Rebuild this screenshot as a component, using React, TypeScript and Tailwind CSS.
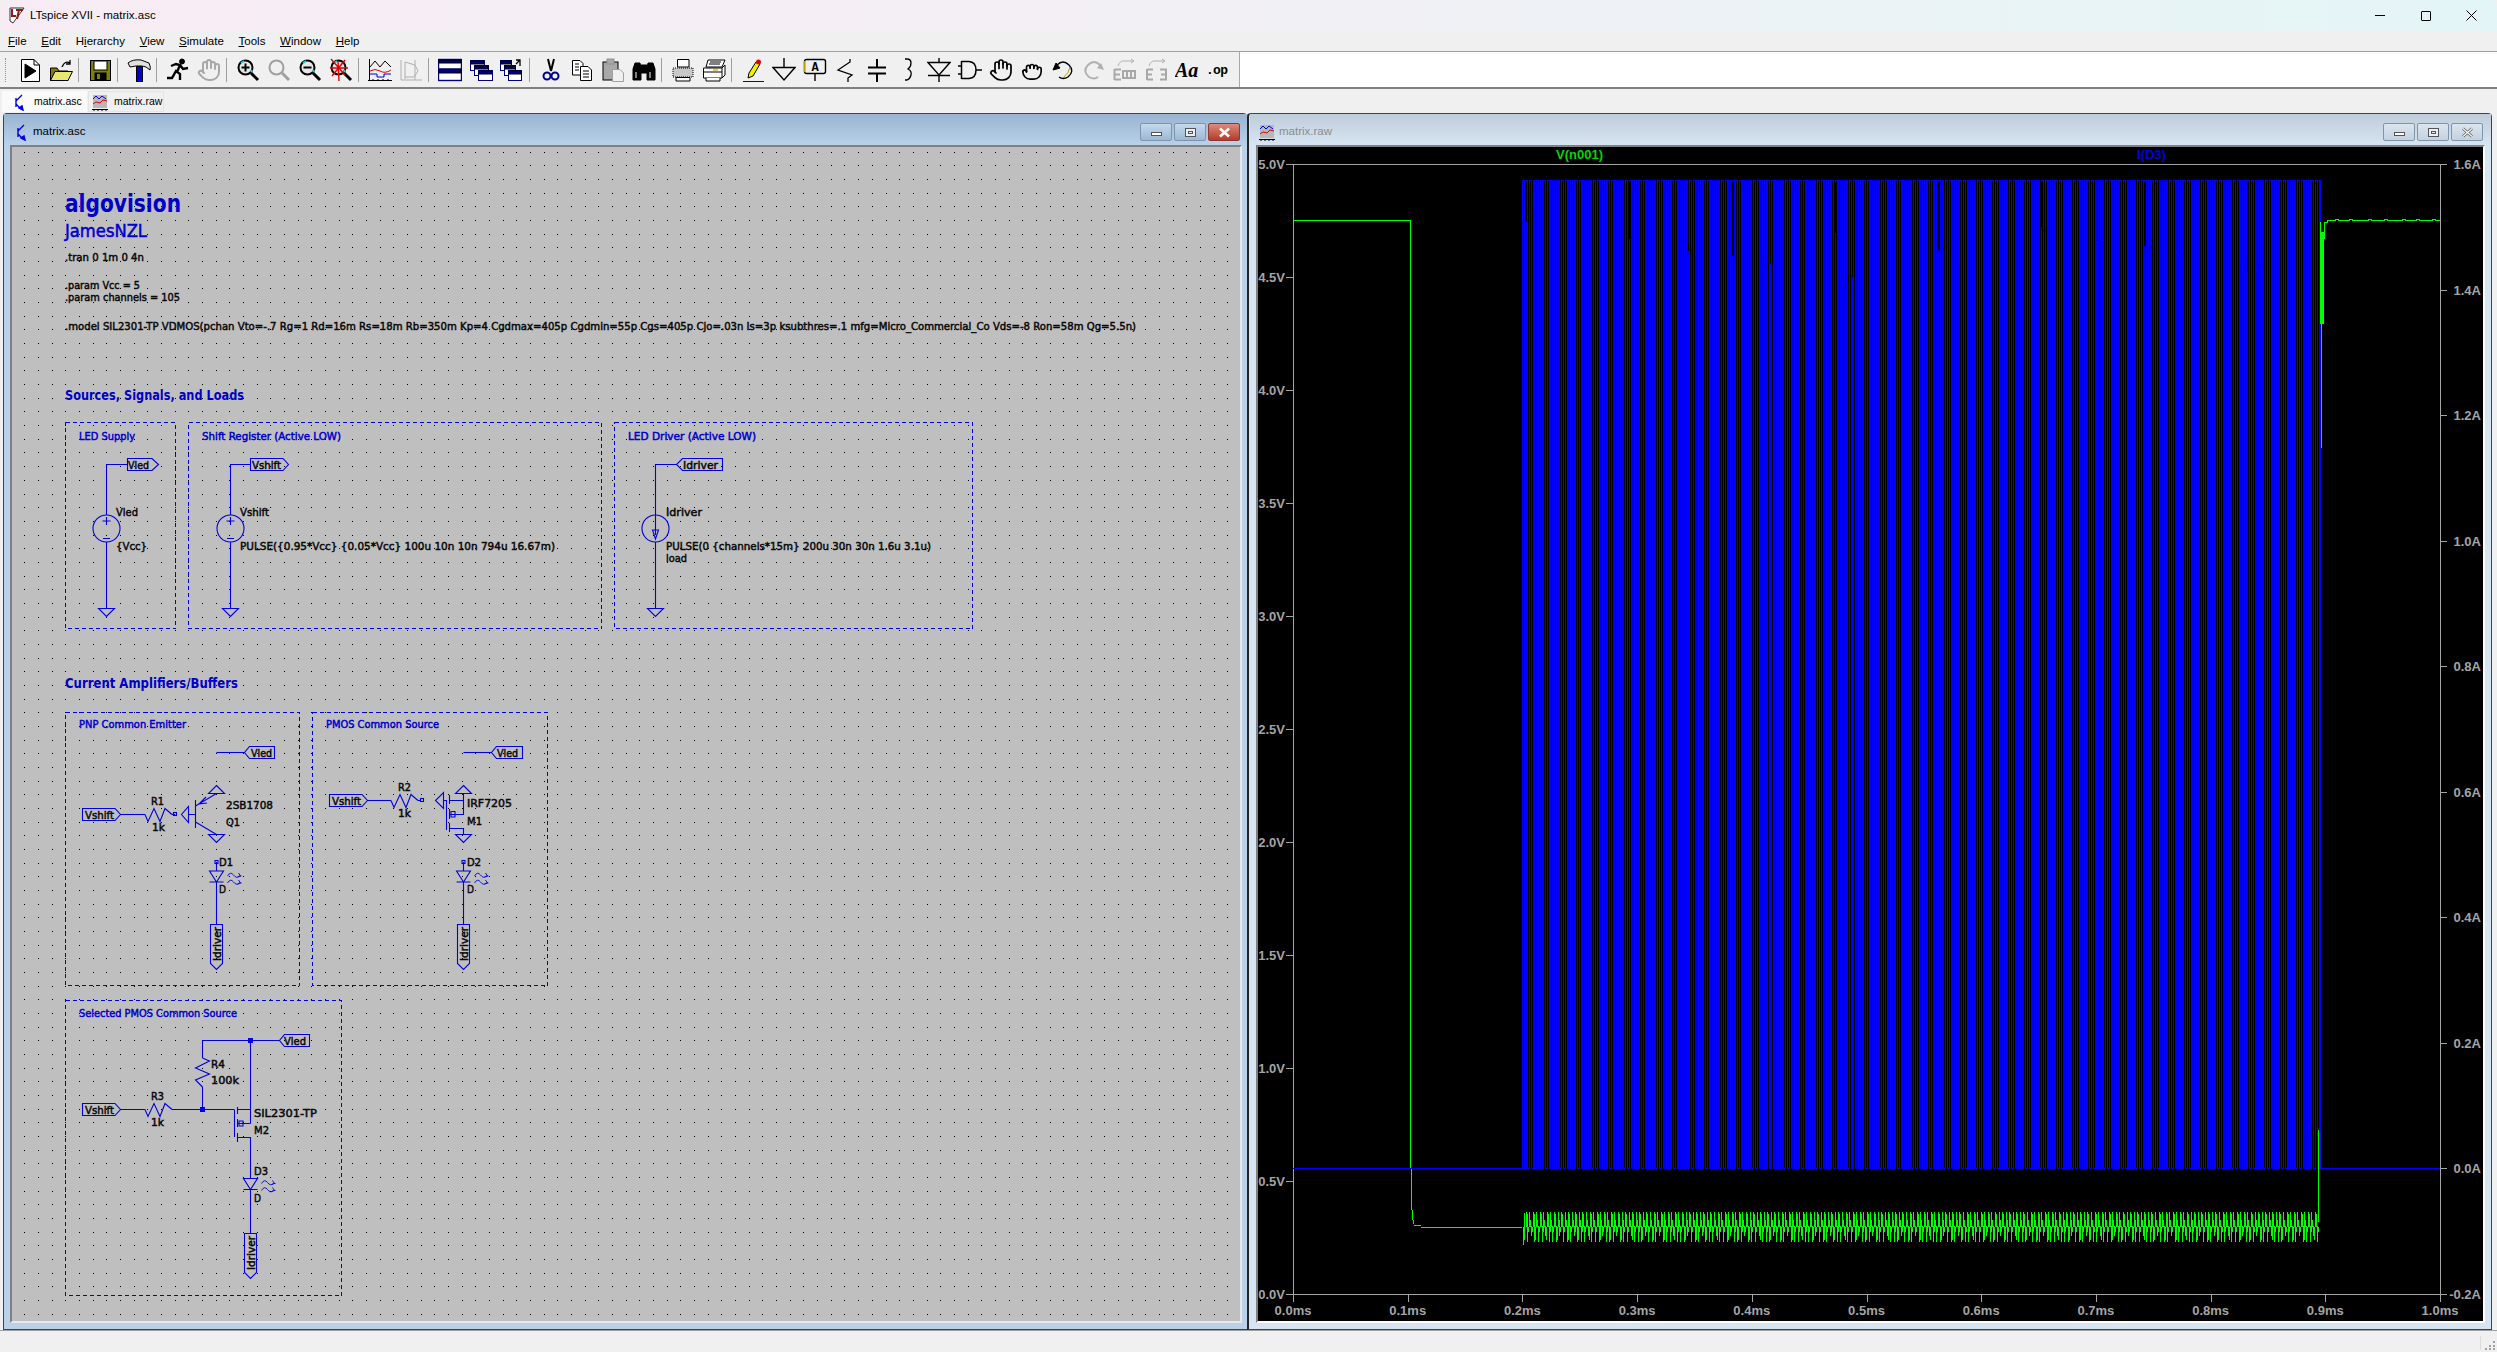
import type { ReactNode } from "react";
import { Grab, Hand } from "lucide-react";

// ---------- shared geometry helpers (page coordinates) ----------
const gnd = (x: number, y: number) => `M${x - 8} ${y}H${x + 8}L${x} ${y + 8}Z`;
const up = (x: number, y: number) => `M${x} ${y - 8}L${x + 8} ${y}H${x - 8}Z`;
const flagR = (a: number, b: number, tip: number, y: number) => `M${a} ${y - 6}H${b}L${tip} ${y}L${b} ${y + 6}H${a}Z`;
const flagL = (tip: number, a: number, b: number, y: number) => `M${b} ${y - 6}H${a}L${tip} ${y}L${a} ${y + 6}H${b}Z`;
const flagD = (x: number, y: number) => `M${x - 6} ${y}H${x + 6}V${y + 39}L${x} ${y + 45}L${x - 6} ${y + 39}Z`;
const led = (x: number, y: number) =>
  `M${x - 7} ${y}H${x + 7}L${x} ${y + 11}ZM${x - 7} ${y + 11}H${x + 7}`;
const ledRays = (x: number, y: number) =>
  `M${x + 11} ${y + 5}q3 -5 6 -1t6 1l2 0M${x + 22} ${y + 2}l2 3l-3 1M${x + 11} ${y + 12}q3 -5 6 -1t6 1l2 0M${x + 22} ${y + 9}l2 3l-3 1`;
const zig = (x: number, y: number) =>
  `M${x} ${y}l3 7l6 -13l6 13l5 -13l7 6`;

const dots = (() => {
  let d = "";
  for (let i = -4; i < 87; i++) {
    for (let j = -65; j < 22; j++) {
      const x = Math.round(65.3 + i * 13.67);
      const y = Math.round(1040.3 + j * 13.67);
      d += `M${x} ${y + 0.5}h1`;
    }
  }
  return d;
})();

const boxes = [
  [65, 422, 110, 206],
  [188, 422, 413, 206],
  [614, 422, 358, 206],
  [65, 712, 234, 273],
  [312, 712, 235, 273],
  [65, 1000, 276, 295],
];

type Txt = { x: number; y: number; t: string; w: number };
const blackText: Txt[] = [
  { x: 65, y: 261, t: ".tran 0 1m 0 4n", w: 79 },
  { x: 65, y: 289, t: ".param Vcc = 5", w: 75 },
  { x: 65, y: 301, t: ".param channels = 105", w: 115 },
  {
    x: 65,
    y: 330,
    t: ".model SIL2301-TP VDMOS(pchan Vto=-.7 Rg=1 Rd=16m Rs=18m Rb=350m Kp=4 Cgdmax=405p Cgdmin=55p Cgs=405p Cjo=.03n Is=3p ksubthres=.1 mfg=Micro_Commercial_Co Vds=-8 Ron=58m Qg=5.5n)",
    w: 1071,
  },
  { x: 128, y: 469, t: "Vled", w: 21 },
  { x: 116, y: 516, t: "Vled", w: 22 },
  { x: 116, y: 550, t: "{Vcc}", w: 31 },
  { x: 252, y: 469, t: "Vshift", w: 29 },
  { x: 240, y: 516, t: "Vshift", w: 29 },
  { x: 240, y: 550, t: "PULSE({0.95*Vcc} {0.05*Vcc} 100u 10n 10n 794u 16.67m)", w: 315 },
  { x: 683, y: 469, t: "Idriver", w: 35 },
  { x: 666, y: 516, t: "Idriver", w: 36 },
  { x: 666, y: 550, t: "PULSE(0 {channels*15m} 200u 30n 30n 1.6u 3.1u)", w: 265 },
  { x: 666, y: 562, t: "load", w: 21 },
  { x: 251, y: 757, t: "Vled", w: 21 },
  { x: 85, y: 819, t: "Vshift", w: 29 },
  { x: 151, y: 805, t: "R1", w: 13 },
  { x: 152, y: 831, t: "1k", w: 13 },
  { x: 226, y: 809, t: "2SB1708", w: 47 },
  { x: 226, y: 826, t: "Q1", w: 14 },
  { x: 219, y: 866, t: "D1", w: 14 },
  { x: 219, y: 893, t: "D", w: 7 },
  { x: 497, y: 757, t: "Vled", w: 21 },
  { x: 332, y: 805, t: "Vshift", w: 29 },
  { x: 398, y: 791, t: "R2", w: 13 },
  { x: 398, y: 817, t: "1k", w: 13 },
  { x: 467, y: 807, t: "IRF7205", w: 45 },
  { x: 467, y: 825, t: "M1", w: 15 },
  { x: 467, y: 866, t: "D2", w: 14 },
  { x: 467, y: 893, t: "D", w: 7 },
  { x: 284, y: 1045, t: "Vled", w: 22 },
  { x: 85, y: 1114, t: "Vshift", w: 29 },
  { x: 151, y: 1100, t: "R3", w: 13 },
  { x: 151, y: 1126, t: "1k", w: 13 },
  { x: 211, y: 1068, t: "R4", w: 14 },
  { x: 211, y: 1084, t: "100k", w: 28 },
  { x: 254, y: 1117, t: "SIL2301-TP", w: 63 },
  { x: 254, y: 1134, t: "M2", w: 15 },
  { x: 254, y: 1175, t: "D3", w: 14 },
  { x: 254, y: 1202, t: "D", w: 7 },
];

const blueSmall: Txt[] = [
  { x: 79, y: 440, t: "LED Supply", w: 56 },
  { x: 202, y: 440, t: "Shift Register (Active LOW)", w: 139 },
  { x: 628, y: 440, t: "LED Driver (Active LOW)", w: 128 },
  { x: 79, y: 728, t: "PNP Common Emitter", w: 107 },
  { x: 326, y: 728, t: "PMOS Common Source", w: 113 },
  { x: 79, y: 1017, t: "Selected PMOS Common Source", w: 158 },
];

const wires = [
  // sources row
  "M127.5 464.5H106.5V515M106.5 542V608",
  flagR(127.5, 152, 158.5, 464.5),
  gnd(106.5, 608.5),
  "M250.5 464.5H230.5V515M230.5 542V608",
  flagR(250.5, 283, 288.5, 464.5),
  gnd(230.5, 608.5),
  "M676.5 464.5H655.5V515M655.5 542V608",
  flagL(676.5, 682.5, 722.5, 464.5),
  gnd(655.5, 608.5),
  // pnp
  "M216.5 752.5H244.5",
  flagL(244.5, 249.5, 274.5, 752.5),
  flagR(82.5, 115, 120.5, 814.5),
  "M120.5 814.5H145",
  "M188.5 814.5H195.5M195.5 800V828",
  up(216.5, 793.5),
  gnd(216.5, 834.5),
  "M216.5 862V871M216.5 881V924",
  flagD(216.5, 924.5),
  // pmos
  "M463.5 752.5H491.5",
  flagL(491.5, 496.5, 522.5, 752.5),
  flagR(329.5, 362, 367.5, 800.5),
  "M367.5 800.5H391",
  "M443.5 800.5H446.5M446.5 800V830M449.5 795V804M449.5 809V819M449.5 823V832",
  "M449.5 800.5H463.5M463.5 793V815M449.5 814.5H463.5M449.5 828.5H463.5V834",
  up(463.5, 793.5),
  gnd(463.5, 834.5),
  "M463.5 862V871M463.5 881V924",
  flagD(463.5, 924.5),
  // selected pmos
  "M202.5 1058V1040.5H279",
  flagL(279.5, 284.5, 309.5, 1040.5),
  "M250.5 1040.5V1123.5",
  "M202.5 1087V1109.5",
  flagR(82.5, 115, 120.5, 1109.5),
  "M120.5 1109.5H145M172 1109.5H234",
  "M234.5 1109.5V1137M237.5 1107V1114M237.5 1119V1127M237.5 1133V1142",
  "M237.5 1109.5H250.5M237.5 1123.5H250.5M237.5 1137.5H250.5V1178M250.5 1190V1233",
  flagD(250.5, 1233.5),
];

// ---------- waveform paths ----------
const PERIOD = 3.556;
const wave = (() => {
  let blue = "M1293 1168.5";
  let fill = "";
  let notch = "";
  let green = "M1523.5 1227V1245M1524.5 1213V1240";
  let k = 0;
  while (1522 + k * PERIOD < 2319) {
    const r = Math.round(1522 + k * PERIOD) + 0.5;
    const f = Math.round(1522 + k * PERIOD + 1.83) + 0.5;
    const next = Math.round(1522 + (k + 1) * PERIOD) + 0.5;
    blue += `H${r}V180.5H${f}V1168.5`;
    if ((k * 7919) % 23 < 1 && next - f > 1) {
      fill += `M${f + 1} ${225 + ((k * 131) % 75)}V1168`;
    }
    // the taller black gaps near the top of the pulse train
    if ((k * 13) % 29 === 0) {
      notch += `M${f + 1} 181.5V${232 + ((k * 97) % 68)}M${next} 181.5V${222 + ((k * 53) % 40)}`;
    }
    if (k > 0 && r < 2316) {
      green += `M${r} 1212V1227M${r + 1} ${k % 2 ? 1214 : 1220}V1227M${f} 1227V${k % 4 === 2 ? 1236 : 1242}M${f + 1} 1227V${k % 3 === 0 ? 1240 : 1232}M${r} 1226.5H${f}`;
    }
    k++;
  }
  blue += "H2321.5V1168.5H2440";
  return { blue, fill, notch, green };
})();

const yLeft = ["5.0V", "4.5V", "4.0V", "3.5V", "3.0V", "2.5V", "2.0V", "1.5V", "1.0V", "0.5V", "0.0V"];
const yRight = ["1.6A", "1.4A", "1.2A", "1.0A", "0.8A", "0.6A", "0.4A", "0.2A", "0.0A", "-0.2A"];
const xAxis = ["0.0ms", "0.1ms", "0.2ms", "0.3ms", "0.4ms", "0.5ms", "0.6ms", "0.7ms", "0.8ms", "0.9ms", "1.0ms"];

// ---------- toolbar icons ----------
const Ico = ({ children }: { children: ReactNode }) => (
  <svg viewBox="0 0 24 24" width={24} height={24} fill="none" stroke="#000" strokeWidth={1}>
    {children}
  </svg>
);

const Mag = ({ mark, gray }: { mark?: ReactNode; gray?: boolean }) => (
  <Ico>
    <circle cx="9.5" cy="9.5" r="7" fill="#d8d8d8" fillOpacity={gray ? 0 : 0.4} stroke={gray ? "#a0a0a0" : "#000"} strokeWidth="2" />
    {!gray && <path d="M5 5l3 -2M15 14l1 -2" stroke="#00d8e8" strokeWidth="2" />}
    <path d="M15 15l7 7" stroke={gray ? "#a0a0a0" : "#000"} strokeWidth="3" />
    {mark}
  </Ico>
);

const MiniWin = ({ x, y, w = 14, h = 10 }: { x: number; y: number; w?: number; h?: number }) => (
  <g>
    <rect x={x + 0.5} y={y + 0.5} width={w} height={h} fill="#fff" stroke="#000080" />
    <rect x={x + 1} y={y + 1} width={w - 1} height={3} fill="#000080" />
  </g>
);

const tools: (ReactNode | null)[][] = [
  [
    <Ico>
      <path d="M3.5 1.5H16L21.5 7V23.5H3.5Z" fill="#fff" />
      <path d="M16 1.5V7H21.5" />
      <path d="M7 6L18 13L7 20Z" fill="#000" />
    </Ico>,
    <Ico>
      <path d="M1.5 10V22.5H19V13H10L8 10Z" fill="#808000" />
      <path d="M1.5 22.5L6 13.5H23.5L19 22.5Z" fill="#e8e870" />
      <path d="M13 9Q16 2 21 5M21 2V6H17" strokeWidth="1.3" />
    </Ico>,
  ],
  [
    <Ico>
      <rect x="2.5" y="2.5" width="20" height="20" fill="#808000" />
      <rect x="6" y="3" width="13" height="9" fill="#fff" />
      <rect x="7" y="15" width="11" height="7" fill="#000" />
      <rect x="9" y="16" width="3" height="5" fill="#808000" stroke="none" />
    </Ico>,
  ],
  [
    <Ico>
      <path d="M1 5Q6 1 14 2L22 5Q24 9 23 12Q19 8 15 8H9L3 9Z" fill="#e0e0e0" />
      <rect x="9.5" y="8.5" width="6" height="15" fill="#0000d0" />
    </Ico>,
  ],
  [
    <Ico>
      <circle cx="16" cy="3.5" r="2.5" fill="#000" />
      <path d="M1 20l5 0l4 -7l4 3l0 6M5 8l5 -2l4 1l-3 7M14 7l3 4l5 -1" strokeWidth="2.4" />
    </Ico>,
    <Hand size={24} color="#a8a8a8" strokeWidth={2} />,
  ],
  [
    <Mag mark={<path d="M9.5 5.5v8M5.5 9.5h8" strokeWidth="2" />} />,
    <Mag gray />,
    <Mag mark={<path d="M5.5 9.5h8" strokeWidth="2" />} />,
    <Mag
      mark={<path d="M2 1l14 16M16 2L3 18M1 10h18M9 3l1 20" stroke="#e00000" strokeWidth="1.4" />}
    />,
  ],
  [
    <Ico>
      <path d="M1.5 1v22M0 22.5h24" strokeWidth="1" />
      <path d="M2 9l5 -6l5 6l5 -6l6 6" />
      <path d="M2 13q5 -3 10 0t11 -1" stroke="#e00000" />
      <path d="M2 16h7v3h7v-3h7" stroke="#0000c0" />
      <path d="M5 23v-2M10 23v-2M15 23v-2M20 23v-2" />
    </Ico>,
    <Ico>
      <path d="M2 2v20h21M6 21V4M6 4l10 3l3 6l-4 6H6M16 2v20" stroke="#b0b0b0" />
    </Ico>,
  ],
  [
    <Ico>
      <rect x="0.5" y="1.5" width="23" height="21" fill="#fff" stroke="#000080" strokeWidth="1.4" />
      <rect x="1" y="2" width="22" height="3" fill="#000080" />
      <rect x="1" y="11" width="22" height="4" fill="#000080" />
      <path d="M0 11h24" stroke="#000080" />
    </Ico>,
    <Ico>
      <MiniWin x={1} y={2} />
      <MiniWin x={5} y={7} />
      <MiniWin x={9} y={12} />
    </Ico>,
    <Ico>
      <MiniWin x={0} y={2} w={11} />
      <MiniWin x={4} y={7} w={11} />
      <MiniWin x={8} y={12} w={13} />
      <path d="M20 8V2H16M20 2L16 6" strokeWidth="1.3" />
    </Ico>,
  ],
  [
    <Ico>
      <path d="M9 1l3 12M15 1l-3 12" strokeWidth="2" />
      <circle cx="8" cy="18" r="3.5" stroke="#000090" strokeWidth="2" />
      <circle cx="16" cy="18" r="3.5" stroke="#000090" strokeWidth="2" />
    </Ico>,
    <Ico>
      <path d="M2.5 2.5H10L13 5.5V17H2.5Z" fill="#fff" />
      <path d="M10.5 8.5H18L21.5 12V22.5H10.5Z" fill="#fff" />
      <path d="M13 13h6M13 16h6M13 19h6M5 6h4M5 9h4M5 12h4" />
    </Ico>,
    <Ico>
      <rect x="2" y="4" width="15" height="18" fill="#a8a8a8" />
      <rect x="6" y="1" width="7" height="5" fill="#a8a8a8" stroke="#909090" />
      <path d="M11.5 11.5H19L22.5 15V23.5H11.5Z" fill="#f0f0f0" stroke="#a0a0a0" />
    </Ico>,
    <Ico>
      <path d="M3 5h5l1 5v12H1V11ZM16 5h5l2 6v11h-8V10Z" fill="#000" />
      <rect x="9" y="7" width="6" height="8" fill="#000" />
      <path d="M4 14v6M18 14v6" stroke="#fff" />
    </Ico>,
  ],
  [
    <Ico>
      <path d="M6.5 1.5H18V9H6.5Z" fill="#fff" />
      <path d="M2 10H22V19H2Z" fill="#c8c8c8" strokeDasharray="1 1" />
      <path d="M5 19.5H19V23H5Z" fill="#fff" />
    </Ico>,
    <Ico>
      <path d="M6 2H23L20 9H4Z" fill="#fff" />
      <path d="M8 4h11M7 6h11" />
      <path d="M1.5 10H20L23 7V17L20 20H1.5Z" fill="#fff" />
      <path d="M20 10V20M1.5 14H20" />
      <path d="M11 12h5" stroke="#d8c000" strokeWidth="1.5" />
      <path d="M4 20V23H18V20" fill="#fff" />
    </Ico>,
  ],
  [
    <Ico>
      <path d="M8 15L15 4L19 6L12 18L7 20Z" fill="#f0f000" stroke="#000" />
      <circle cx="17.5" cy="4" r="2.5" fill="#e00000" stroke="none" />
      <path d="M2 23.5H23" stroke="#0000e0" />
    </Ico>,
    <Ico>
      <path d="M12 0V9M1 9.5H23L12 22Z" strokeWidth="1.4" />
    </Ico>,
    <Ico>
      <rect x="1.5" y="1.5" width="21" height="14" rx="2" stroke="#000" strokeWidth="1.4" fill="#f0f0f0" />
      <path d="M1.5 3v11" stroke="#b8a000" strokeWidth="1.2" />
      <text x="12" y="13" textAnchor="middle" className="font-['Liberation_Mono'] text-[12px] font-bold" fill="#000" stroke="none">
        A
      </text>
      <path d="M12 16V23" strokeWidth="1.4" />
    </Ico>,
    <Ico>
      <path d="M16 1V4L4 12L18 17L14 20V24" strokeWidth="1.3" />
    </Ico>,
    <Ico>
      <path d="M12 1V9M3 9.5H21M3 15.5H21M12 16V24" strokeWidth="2" />
    </Ico>,
    <Ico>
      <path d="M9 1h2q4 0 4 4t-3 6q4 2 3 6t-4 5H9" strokeWidth="1.3" />
    </Ico>,
    <Ico>
      <path d="M12 0V4M1 4.5H23L12 17ZM1 17.5H23M12 18V24" strokeWidth="1.4" />
    </Ico>,
    <Ico>
      <path d="M3.5 3V21M3.5 3.5H11Q18 4 18 12T11 20.5H3.5M18 12H24M0 8H3M0 16H3" strokeWidth="1.5" />
    </Ico>,
    <Hand size={24} color="#000" strokeWidth={1.7} />,
    <Grab size={22} color="#000" strokeWidth={1.8} />,
    <Ico>
      <path d="M6 7Q12 1 18 7T17 19Q12 22 8 19" strokeWidth="1.4" />
      <path d="M19 9Q18 15 12 20" stroke="#b8a000" strokeWidth="1" />
      <path d="M2 12L5 5L9 10Z" fill="#000" />
    </Ico>,
    <Ico>
      <path d="M18 7Q12 1 6 7T7 19Q12 22 16 19" stroke="#b0b0b0" strokeWidth="2" />
      <path d="M22 12L19 5L15 10Z" fill="#b0b0b0" stroke="none" />
    </Ico>,
    <Ico>
      <path d="M5 8Q7 2 12 3H20M18 1l3 2l-3 2" stroke="#b0b0b0" />
      <path d="M1.5 11V22M1.5 11.5H8M1.5 16.5H7M1.5 21.5H8M10 13H22V20H10ZM14 14V19M18 14V19" stroke="#a8a8a8" strokeWidth="2" />
    </Ico>,
    <Ico>
      <path d="M5 8Q7 2 12 3H20M18 1l3 2l-3 2" stroke="#b0b0b0" />
      <path d="M3 11V22M3 11.5H9M3 16.5H8M3 21.5H9M16 11.5H22V21.5H16M17 16.5H22" stroke="#a8a8a8" strokeWidth="2" />
    </Ico>,
    <Ico>
      <text x="0" y="19" className="font-['Liberation_Serif'] text-[20px] font-bold italic" fill="#000" stroke="none">
        Aa
      </text>
    </Ico>,
    <Ico>
      <text x="0" y="16" className="font-['Liberation_Mono'] text-[13px] font-bold" fill="#000" stroke="none" textLength={22}>
        .op
      </text>
    </Ico>,
  ],
];

const menus: [string, string][] = [
  ["F", "ile"],
  ["E", "dit"],
  ["H", "ierarchy"],
  ["V", "iew"],
  ["S", "imulate"],
  ["T", "ools"],
  ["W", "indow"],
  ["H", "elp"],
];

function WinButtons({ active }: { active: boolean }) {
  const base =
    "flex h-[18px] w-[32px] items-center justify-center rounded-[2px] border border-[#7f95ad]";
  const plain = active ? "bg-gradient-to-b from-[#c5d8ec] to-[#9db8d6]" : "bg-gradient-to-b from-[#dbe5ef] to-[#c3d1e0]";
  return (
    <div className="ml-auto flex gap-[2px]">
      <div className={`${base} ${plain}`}>
        <div className="mt-[3px] h-[4px] w-[11px] border border-[#555] bg-white" />
      </div>
      <div className={`${base} ${plain}`}>
        <div className="flex h-[9px] w-[11px] items-center justify-center border border-[#555] bg-[#e8eef4]">
          <div className="h-[3px] w-[5px] border border-[#555]" />
        </div>
      </div>
      <div
        className={`${base} ${
          active ? "border-[#8a3a32] bg-gradient-to-b from-[#dc8a7c] to-[#b33a28]" : plain
        }`}
      >
        <svg width="13" height="11" viewBox="0 0 13 11">
          <path d="M2 1.5L11 9.5M11 1.5L2 9.5" stroke={active ? "#fff" : "#555"} strokeWidth="2.6" />
          {!active && <path d="M2 1.5L11 9.5M11 1.5L2 9.5" stroke="#fff" strokeWidth="1.2" />}
        </svg>
      </div>
    </div>
  );
}

const SchemIcon = () => (
  <svg width="13" height="17" viewBox="0 0 13 17" fill="none" stroke="#0000e0" strokeWidth="1.4">
    <path d="M3 4V13M3 7L9 1M3 10L8 15" />
    <path d="M10 16L6 14L9 12Z" fill="#0000e0" />
  </svg>
);

const WaveIcon = () => (
  <svg width="16" height="17" viewBox="0 0 16 17" fill="none">
    <rect x="1" y="1" width="14" height="13" fill="#b8b8b8" />
    <path d="M1 5l3 -3l3 3l3 -3l4 3" stroke="#0000e0" />
    <path d="M1 10l3 -2l4 1l3 -3l4 1" stroke="#e00000" />
    <path d="M0 15.5h16M2 16v1M6 16v1M10 16v1M14 16v1" stroke="#000" />
  </svg>
);

function Schematic() {
  return (
    <svg viewBox="12 147 1228 1173" width={1228} height={1173} fill="none" className="block font-['DejaVu_Sans',sans-serif]">
      <path d={dots} stroke="#000" shapeRendering="crispEdges" />
      {boxes.map(([x, y, w, h], i) => (
        <rect
          key={i}
          x={x + 0.5}
          y={y + 0.5}
          width={w}
          height={h}
          stroke="#0000e6"
          strokeDasharray="4 3"
          shapeRendering="crispEdges"
        />
      ))}
      <g stroke="#0000e0" strokeWidth="1.1">
        {wires.map((d, i) => (
          <path key={i} d={d} />
        ))}
        {/* vsources */}
        {[106.5, 230.5].map((x) => (
          <g key={x}>
            <circle cx={x} cy={528.5} r={13.5} />
            <path d={`M${x} 517V525M${x - 4} 521H${x + 4}M${x - 3.5} 538.5H${x + 3.5}`} />
          </g>
        ))}
        {/* current source */}
        <circle cx={655.5} cy={528.5} r={13.5} />
        <path d="M655.5 515V535M652.5 530L655.5 539L658.5 530Z" />
        {/* resistors */}
        <path d={zig(145, 814.5)} />
        <path d="M172 814.5H175" />
        <rect x="173.5" y="812.5" width="3" height="3" />
        <path d={zig(391, 800.5)} />
        <path d="M418 800.5H421" />
        <rect x="420.5" y="798.5" width="3" height="3" />
        <path d={zig(145, 1109.5)} />
        <path d="M202.5 1058L209.5 1061L195.5 1068L209.5 1074L195.5 1080L202.5 1087" />
        {/* pnp */}
        <path d="M188.5 806.5V822.5L181.5 814.5Z" />
        <path d="M195.5 806L216.5 793.5M195.5 822L216.5 834.5M199 804L206 797M199 804L207 803" />
        {/* pmos */}
        <path d="M443.5 792.5V808.5L435.5 800.5Z" />
        <path d="M455 811.5H451V817H455Z" />
        <path d="M243 1121H239V1126H243Z" />
        {/* leds */}
        {[
          [216.5, 871],
          [463.5, 871],
          [250.5, 1178.5],
        ].map(([x, y]) => (
          <g key={x}>
            <path d={led(x, y)} />
            <path d={ledRays(x, y)} strokeWidth="0.9" />
          </g>
        ))}
        <rect x="215" y="860.5" width="3" height="3" />
        <rect x="462" y="860.5" width="3" height="3" />
      </g>
      <rect x="248" y="1038" width="5" height="5" fill="#0000e0" />
      <rect x="200" y="1107" width="5" height="5" fill="#0000e0" />

      <text x="65" y="212" textLength={116} lengthAdjust="spacingAndGlyphs" fill="#0000c8" className="text-[25px] font-bold">
        algovision
      </text>
      <text x="65" y="237" textLength={82} lengthAdjust="spacingAndGlyphs" fill="#0000d0" stroke="#0000d0" strokeWidth="0.5" className="text-[17px]">
        JamesNZL
      </text>
      <text x="65" y="400" textLength={179} lengthAdjust="spacingAndGlyphs" fill="#0000c8" className="text-[13.5px] font-bold">
        Sources, Signals, and Loads
      </text>
      <text x="65" y="688" textLength={173} lengthAdjust="spacingAndGlyphs" fill="#0000c8" className="text-[13.5px] font-bold">
        Current Amplifiers/Buffers
      </text>
      {blueSmall.map((t) => (
        <text key={t.t} x={t.x} y={t.y} textLength={t.w} lengthAdjust="spacingAndGlyphs" fill="#0000d0" stroke="#0000d0" strokeWidth="0.5" className="text-[11px]">
          {t.t}
        </text>
      ))}
      {blackText.map((t, i) => (
        <text key={i} x={t.x} y={t.y} textLength={t.w} lengthAdjust="spacingAndGlyphs" fill="#0a0a0a" stroke="#0a0a0a" strokeWidth="0.5" className="text-[11px]">
          {t.t}
        </text>
      ))}
      {[216.5, 463.5, 250.5].map((x, i) => {
        const cy = i === 2 ? 1253 : 944;
        return (
          <text
            key={x}
            x={x}
            y={cy + 4}
            textAnchor="middle"
            transform={`rotate(-90 ${x} ${cy})`}
            textLength={34}
            lengthAdjust="spacingAndGlyphs"
            fill="#0a0a0a"
            stroke="#0a0a0a"
            strokeWidth="0.5"
            className="text-[11px]"
          >
            Idriver
          </text>
        );
      })}
    </svg>
  );
}

function Plot() {
  const axis = "#a4a4a4";
  return (
    <svg viewBox="1258 147 1225 1173" width={1225} height={1173} fill="none" className="block font-['Liberation_Sans',sans-serif]">
      <g stroke={axis} shapeRendering="crispEdges">
        <path d="M1286 164.5H2447M1286 1294.5H2447M1293.5 164V1302M2440.5 164V1302" />
        {yLeft.map((_, i) => (
          <path key={i} d={`M1286 ${Math.round(164 + i * 113) + 0.5}H1293`} />
        ))}
        {yRight.map((_, i) => (
          <path key={i} d={`M2440 ${Math.round(164 + i * 125.56) + 0.5}H2447`} />
        ))}
        {xAxis.map((_, i) => (
          <path key={i} d={`M${Math.round(1293 + i * 114.7) + 0.5} 1294V1302`} />
        ))}
      </g>
      {yLeft.map((t, i) => (
        <text key={t} x="1285" y={164 + i * 113 + 5} textAnchor="end" fill={axis} className="text-[13px] font-bold">
          {t}
        </text>
      ))}
      {yRight.map((t, i) => (
        <text key={t} x="2481" y={164 + i * 125.56 + 5} textAnchor="end" fill={axis} className="text-[13px] font-bold">
          {t}
        </text>
      ))}
      {xAxis.map((t, i) => (
        <text key={t} x={1293 + i * 114.7} y="1315" textAnchor="middle" fill={axis} className="text-[13px] font-bold">
          {t}
        </text>
      ))}
      <text x="1556" y="159" fill="#00d800" className="text-[13px] font-bold">
        V(n001)
      </text>
      <text x="2137" y="159" fill="#0000e0" className="text-[13px] font-bold">
        I(D3)
      </text>

      <g shapeRendering="crispEdges">
        <path
          d="M1293.5 220.5H1410.5V1168M1411.5 1168V1210M1412.5 1210V1220M1413.5 1220V1224M1414 1225.5H1421M1421 1227.5H1522"
          stroke="#00ff00"
        />
        <path d={wave.green} stroke="#00ff00" />
        <path d={wave.blue} stroke="#0000ff" />
        <path d={wave.fill} stroke="#0000ff" />
        <path d={wave.notch} stroke="#000" />
        <path d="M2318.5 1130V1222" stroke="#00ff00" />
        <path d="M2321.5 323V448" stroke="#20c8c0" />
        <path d="M2320 232h3v91h-3zM2320.5 222V323M2324.5 222V239" fill="#00ff00" stroke="#00ff00" />
        <path d="M2325 222.5H2327V220.5H2335V219.5H2338V220.5H2349V219.5H2352V220.5H2368V219.5H2371V220.5H2384V219.5H2387V220.5H2402V219.5H2405V220.5H2416V219.5H2419V220.5H2432V219.5H2435V220.5H2440" stroke="#00ff00" />
      </g>
    </svg>
  );
}

function Win({ active, title, icon, children }: { active: boolean; title: string; icon: ReactNode; children: ReactNode }) {
  return (
    <div
      className={`flex flex-col rounded-t-[4px] border-t border-b border-[#404448] ${
        active ? "bg-[#b9d1ea]" : "bg-[#d7e4f2]"
      } ${active ? "w-[1244px] border-l pl-[6px] pr-[5px]" : "flex-1 border-l-2 border-r border-l-[#202428] pl-[7px] pr-[6px]"}`}
    >
      <div
        className={`-mx-[6px] flex h-[31px] items-center px-[6px] pr-[8px] pt-[5px] ${
          active ? "bg-gradient-to-b from-[#99b4d1] to-[#b9d1ea]" : "bg-gradient-to-b from-[#bfcddb] to-[#d7e4f2]"
        }`}
      >
        <div className={`flex w-[22px] justify-center ${active ? "" : "w-[21px]"}`}>{icon}</div>
        <span className={`ml-[1px] text-[11.5px] ${active ? "text-black" : "text-[#8c8c8c]"}`}>{title}</span>
        <WinButtons active={active} />
      </div>
      {children}
      <div className="h-[6px]" />
    </div>
  );
}

export default function App() {
  return (
    <div className="flex h-[1352px] w-[2497px] flex-col overflow-hidden bg-[#f0f0f0] font-['Liberation_Sans',sans-serif] text-black">
      {/* title bar */}
      <div className="flex h-[31px] items-center rounded-t-[8px] bg-gradient-to-r from-[#f8ecf4] via-[#f2f0f5] to-[#e3f5f6] pl-[9px]">
        <svg width="16" height="17" viewBox="0 0 16 17" fill="none">
          <path d="M1 1H15L10 8L4 16L1 14Z" fill="#fff" stroke="#333" />
          <path d="M3 2V9H7M7 3H14M10 3L8 12" stroke="#8c1c1c" strokeWidth="2" />
        </svg>
        <span className="ml-[5px] text-[11.5px]">LTspice XVII - matrix.asc</span>
        <div className="ml-auto flex h-full items-center">
          <div className="flex w-[46px] justify-center">
            <div className="h-px w-[10px] bg-black" />
          </div>
          <div className="flex w-[46px] justify-center">
            <div className="h-[10px] w-[10px] rounded-[1px] border border-black" />
          </div>
          <div className="flex w-[46px] justify-center pr-px">
            <svg width="11" height="11" viewBox="0 0 11 11">
              <path d="M0.5 0.5L10.5 10.5M10.5 0.5L0.5 10.5" stroke="#000" />
            </svg>
          </div>
          <div className="w-[2px]" />
        </div>
      </div>

      {/* menu bar */}
      <div className="flex h-[21px] items-center gap-[14.7px] border-b border-[#a0a0a0] pl-[8px] pt-[2px] text-[11.5px]">
        {menus.map(([a, b]) => (
          <span key={a + b}>
            {a === "H" && b === "ierarchy" ? (
              <>
                H<u>i</u>erarchy
              </>
            ) : (
              <>
                <u>{a}</u>
                {b}
              </>
            )}
          </span>
        ))}
      </div>

      {/* toolbar */}
      <div className="flex h-[37px] border-b-2 border-[#808080] bg-white">
        <div className="flex w-[1240px] items-center border-r border-[#a8a8a8] bg-[#f0f0f0] pl-[5px]">
          <div className="mr-[7px] h-[24px] w-[2px] border-l border-dotted border-[#909090]" />
          {tools.map((group, g) => (
            <div key={g} className="flex items-center">
              {g > 0 && <div className="ml-[2px] mr-[5px] h-[24px] w-px bg-[#a0a0a0]" />}
              {group.map((icon, i) => (
                <div key={i} className="flex w-[31px] justify-center">
                  {icon}
                </div>
              ))}
            </div>
          ))}
        </div>
      </div>

      {/* document tabs */}
      <div className="flex h-[24px] items-end pl-[2px]">
        <div className="mb-[1px] flex h-[21px] w-[85px] items-center gap-[8px] bg-[#fafafa] pl-[11px] pt-[1px] text-[10.5px]">
          <SchemIcon />
          <span>matrix.asc</span>
        </div>
        <div className="mb-[1px] ml-px flex h-[21px] w-[76px] items-center gap-[6px] border border-[#e4e4e4] pl-[3px] pt-[1px] text-[10.5px]">
          <WaveIcon />
          <span>matrix.raw</span>
        </div>
      </div>

      {/* MDI area */}
      <div className="flex min-h-0 flex-1 pl-[3px] pr-[5px]">
        <Win active title="matrix.asc" icon={<SchemIcon />}>
          <div className="min-h-0 flex-1 overflow-hidden border-2 border-[#808080] border-r-[#e8e8e8] border-b-[#e8e8e8] bg-[#bfbfbf]">
            <Schematic />
          </div>
        </Win>
        <Win active={false} title="matrix.raw" icon={<WaveIcon />}>
          <div className="min-h-0 flex-1 overflow-hidden border-2 border-[#808080] border-r-white border-b-white bg-black">
            <Plot />
          </div>
        </Win>
      </div>

      {/* status bar */}
      <div className="flex h-[22px] items-end justify-end border-t border-[#a0a0a0] pr-[1px]">
        <div className="mb-[2px] flex h-[14px] w-[16px] items-end justify-end border-l border-[#dcdcdc]">
          <svg width="11" height="11" viewBox="0 0 11 11">
            <path d="M8 2h2v2h-2zM4 6h2v2h-2zM8 6h2v2h-2zM0 9h2v2H0zM4 9h2v2H4zM8 9h2v2H8z" fill="#a0a0a0" />
          </svg>
        </div>
      </div>
    </div>
  );
}
